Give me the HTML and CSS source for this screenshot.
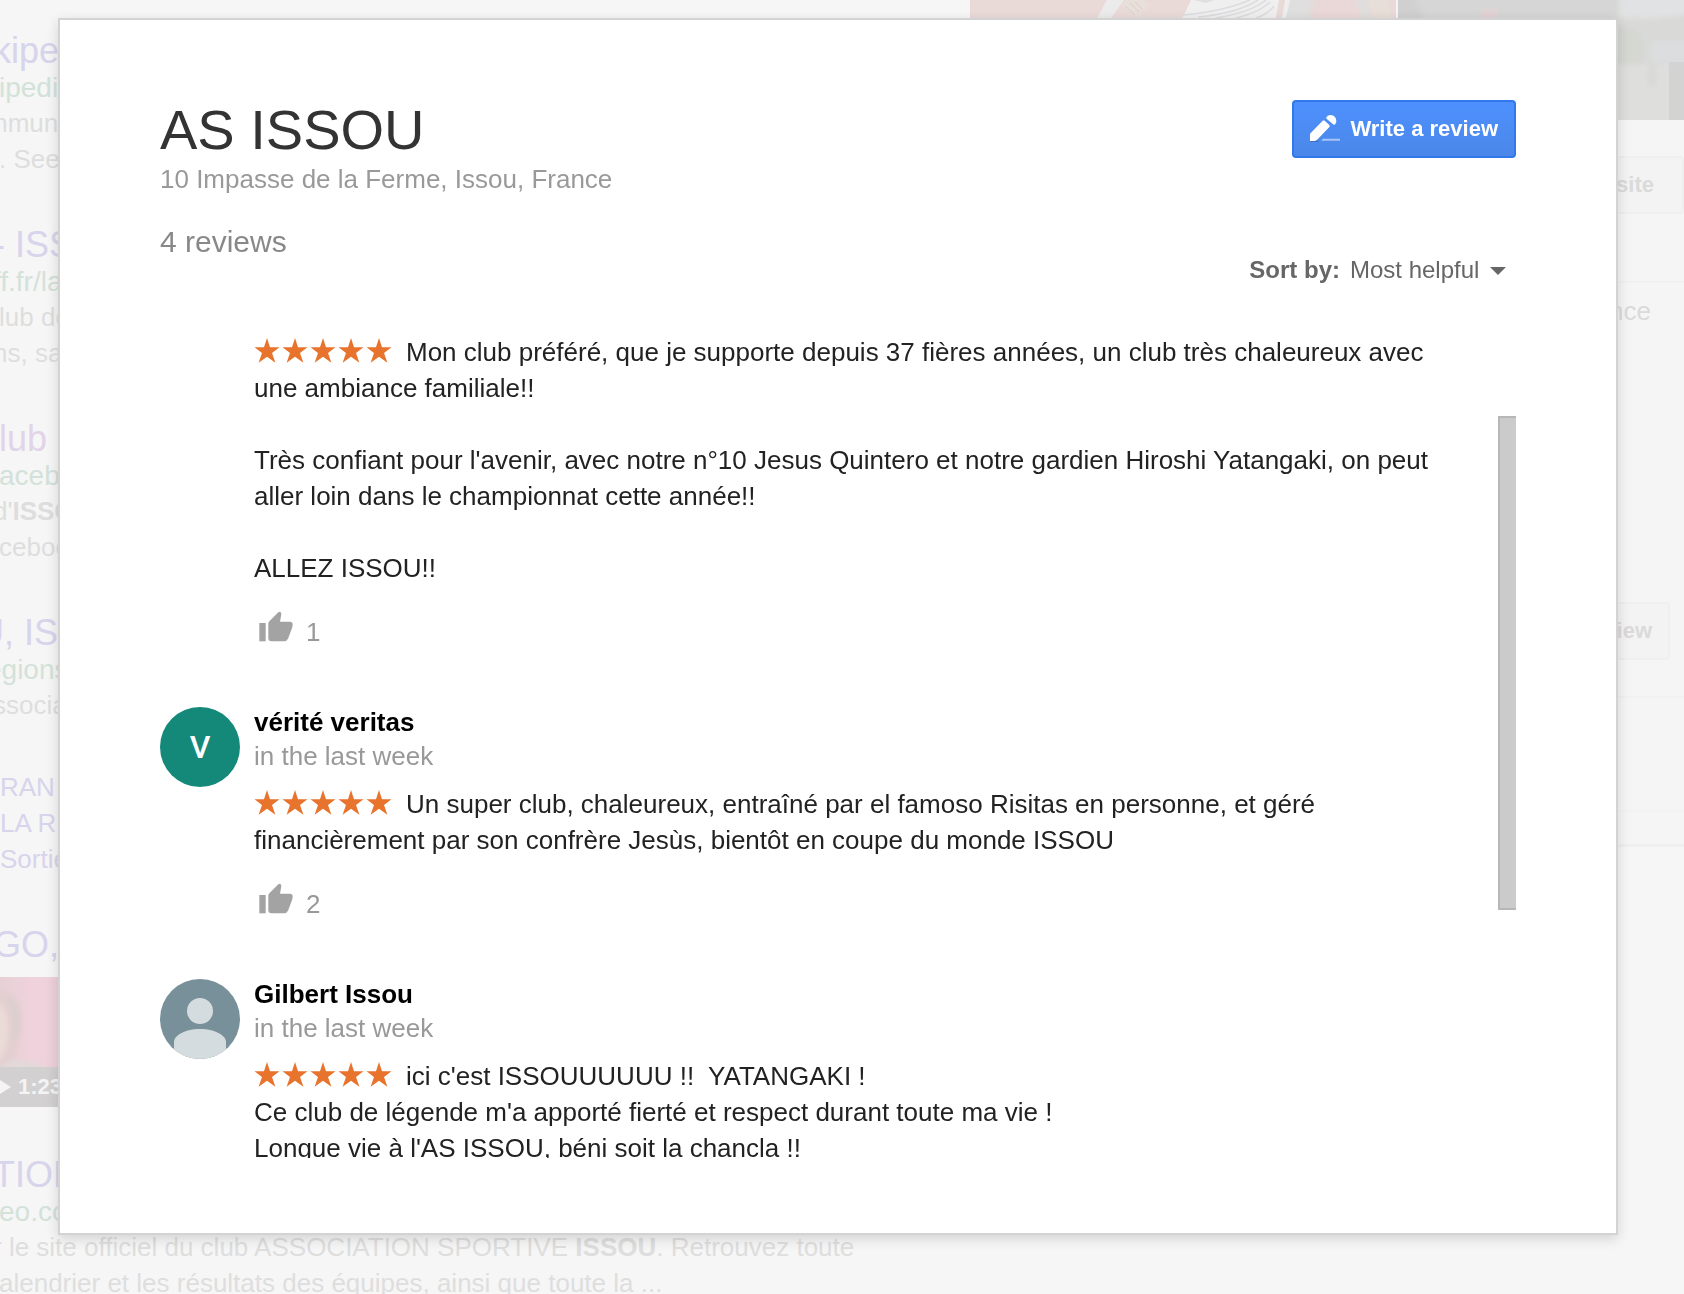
FILE: index.html
```html
<!DOCTYPE html>
<html lang="en">
<head>
<meta charset="utf-8">
<meta name="viewport" content="width=device-width, initial-scale=1">
<title>AS ISSOU reviews</title>
<link rel="stylesheet" href="styles.css">
</head>
<body>
<svg width="0" height="0" class="sprite" aria-hidden="true">
  <symbol id="star" viewBox="0 0 26 25">
    <path d="M13 0l3 9.200h9.500l-7.500 5.800 3.400 9.700-8.400-5.900-8.400 5.900 3.400-9.700L.5 9.200H10z"/>
  </symbol>
  <symbol id="stars" viewBox="0 0 138 25">
    <use href="#star" x="0" width="26" height="25"/>
    <use href="#star" x="28" width="26" height="25"/>
    <use href="#star" x="56" width="26" height="25"/>
    <use href="#star" x="84" width="26" height="25"/>
    <use href="#star" x="112" width="26" height="25"/>
  </symbol>
  <symbol id="thumb" viewBox="57 34 102 93">
    <path d="M58 70h19v55H58z"/>
    <path d="M85 72q0-4 3-7l27-27q3-3 6-1 4 2 3 7l-4 22h30q8 0 8 8 0 7-2 12l-12 31q-4 8-12 8H94q-9 0-9-9z"/>
  </symbol>
</svg>

<div class="page">
  <main class="results">
    <article class="result">
      <a href="#" class="title bleed-1">kipedia</a>
      <cite class="bleed-0">ipedia.org</cite>
      <p class="bleed-2">mmune</p>
      <p class="bleed-0">. See more</p>
    </article>
    <article class="result">
      <a href="#" class="title bleed-1">- ISSOU</a>
      <cite class="bleed-1">ff.fr/la</cite>
      <p class="bleed-0">lub de</p>
      <p class="bleed-1">ns, sa</p>
    </article>
    <article class="result">
      <a href="#" class="title visited bleed-0">lub de</a>
      <cite class="bleed-0">acebook</cite>
      <p class="bleed-1">d'<b>ISSOU</b></p>
      <p class="bleed-0">cebook</p>
    </article>
    <article class="result">
      <a href="#" class="title bleed-3">U, ISSOU</a>
      <cite class="bleed-2">egions</cite>
      <p class="bleed-1">ssociation</p>
      <ul class="sitelinks">
        <li><a href="#">RAN</a></li>
        <li><a href="#">LA RE</a></li>
        <li><a href="#">Sortie</a></li>
      </ul>
    </article>
    <article class="result">
      <a href="#" class="title bleed-1">GO, IS</a>
      <div class="video">
        <svg viewBox="0 0 80 130" preserveAspectRatio="none" aria-hidden="true">
          <defs>
            <linearGradient id="pink" x1="0" x2="1"><stop offset="0" stop-color="#e6d0d6"/><stop offset=".4" stop-color="#f0d2dc"/><stop offset="1" stop-color="#ead0d8"/></linearGradient>
            <filter id="soft"><feGaussianBlur stdDeviation="2.500"/></filter>
          </defs>
          <path fill="url(#pink)" d="M0 0h80v130H0z"/>
          <g filter="url(#soft)">
            <path fill="#e3cfd0" d="M-5 14C8 10 22 22 22 42c0 18-4 36-14 50H-5z"/>
            <path fill="#dccfcf" d="M6 20c12 2 16 14 14 32-1 9-4 12-7 8-1-14-1-30-7-40z"/>
            <path fill="#ebdbd8" d="M-5 26c9 0 13 12 13 24S6 78-5 86z"/>
            <path fill="#e2d9d9" d="M14 82c20 2 34 8 44 18v30H-5V92z"/>
          </g>
        </svg>
        <span class="duration"><svg width="14" height="16" viewBox="0 0 14 16" aria-hidden="true"><path d="M0 1l11 7-11 7z"/></svg>1:23</span>
      </div>
    </article>
    <article class="result">
      <a href="#" class="title bleed-1">TION SP</a>
      <cite class="bleed-0">eo.com</cite>
      <p class="bleed-1">r le site officiel du club ASSOCIATION SPORTIVE <b>ISSOU</b>. Retrouvez toute</p>
      <p class="bleed-0">alendrier et les résultats des équipes, ainsi que toute la ...</p>
    </article>
  </main>

  <aside class="panel">
    <div class="photos">
      <svg viewBox="0 0 426 120" preserveAspectRatio="none" aria-hidden="true">
        <path fill="#e9dad8" d="M0 0h426v120H0z"/>
        <path fill="#ecebec" d="M137 0h17l-13 18h-14z"/>
        <path fill="#e8dfda" d="M155 0h18l6 4-3 7-4-1-1 6-5 1-15-11z"/>
        <path fill="none" stroke="#d8cdc8" d="M155 6l10 9M160 3l9 9M165 2l7 7"/>
        <path fill="#efeff0" d="M221 0h88l-4 22H209l5-7z"/>
        <path fill="none" stroke="#dcdcde" stroke-width="1.500" d="M214 15q40-4 66-15M228 17q40-4 60-17M246 18q36-6 50-18M266 18q24-6 34-16M286 18q12-4 18-12"/>
        <path fill="#dfdfdf" d="M224 0h20l-8 3zM316 0h22l-3 18h-20z"/>
        <path fill="#eeeeef" d="M315 0h5l-4 18h-4z"/>
        <path fill="#e1dddd" d="M338 0h60l4 18h-66z"/>
        <path fill="#e9d8d7" d="M345 0h40l6 18h-50z"/>
        <path fill="#e7ded7" d="M398 0h20l4 18h-17z"/>
      </svg>
      <svg viewBox="0 0 286 120" preserveAspectRatio="none" aria-hidden="true">
        <path fill="#dededd" d="M0 0h286v120H0z"/>
        <g filter="url(#soft)">
          <path fill="#d5d6d5" d="M-6-6h226v28H-6z"/>
          <path fill="#cfd0cf" d="M-6-6h20l14 28H-6z"/>
          <path fill="#e1e2e3" d="M224-6h70v20l-30 4-40-2z"/>
          <path fill="#d9dad8" d="M216 18q30 4 80-6v52h-80z"/>
          <path fill="#d5d7d1" d="M206 26q24-2 36 8 6 14 2 30h-38z"/>
          <path fill="#dcdddf" d="M254 42h40v20h-40z"/>
          <path fill="#d8d8d8" d="M250 64h8v22h-8z"/>
          <path fill="#e2d2d4" d="M82 9h18v10H84z"/>
        </g>
        <path fill="#d3d3d3" d="M271 62h15v58h-15z"/>
      </svg>
    </div>
    <div class="site-row"><button type="button" class="ghost">Website</button></div>
    <p class="address">Issou, France</p>
    <div class="review-row"><button type="button" class="ghost">Write a review</button></div>
    <div class="panel-row"></div>
    <div class="panel-foot"></div>
  </aside>
</div>

<section class="dialog" role="dialog" aria-labelledby="place">
  <header class="head">
    <div class="about">
      <h1 id="place">AS ISSOU</h1>
      <p class="where">10 Impasse de la Ferme, Issou, France</p>
      <p class="count">4 reviews</p>
    </div>
    <div class="tools">
      <button type="button" class="write">
        <svg width="30" height="28" viewBox="60 54 90 84" aria-hidden="true">
          <path fill="#4272bd" d="M60 131h28l-4 4H60z"/>
          <path fill="#fff" d="M60 110l38-39q3-3 6 0l14 13q3 3 0 6l-35 37q-5 5-10 5H60z"/>
          <path fill="#fff" d="M108 64q4-10 14-10 8 0 13 6 5 7 4 14-2 7-7 10z"/>
          <path fill="#a6c5f7" d="M98 125h52v6H94z"/>
        </svg>
        Write a review
      </button>
      <div class="sort">
        <label for="sort">Sort by:</label>
        <select id="sort"><option>Most helpful</option></select>
        <svg width="16" height="8" viewBox="0 0 16 8" aria-hidden="true"><path d="M0 0h16L8 8z"/></svg>
      </div>
    </div>
  </header>

  <div class="scroller">
    <div class="reviews">
      <article class="review">
        <div class="body">
          <p class="text"><svg class="stars" role="img" aria-label="5 stars"><use href="#stars"/></svg>Mon club préféré, que je supporte depuis 37 fières années, un club très chaleureux avec une ambiance familiale!!<br><br>Très confiant pour l'avenir, avec notre n°10 Jesus Quintero et notre gardien Hiroshi Yatangaki, on peut aller loin dans le championnat cette année!!<br><br>ALLEZ ISSOU!!</p>
          <button type="button" class="like"><svg width="34" height="31" aria-hidden="true"><use href="#thumb"/></svg>1</button>
        </div>
      </article>

      <article class="review">
        <div class="avatar letter">V</div>
        <div class="body">
          <h2>vérité veritas</h2>
          <p class="when">in the last week</p>
          <p class="text"><svg class="stars" role="img" aria-label="5 stars"><use href="#stars"/></svg>Un super club, chaleureux, entraîné par el famoso Risitas en personne, et géré financièrement par son confrère Jesùs, bientôt en coupe du monde ISSOU</p>
          <button type="button" class="like"><svg width="34" height="31" aria-hidden="true"><use href="#thumb"/></svg>2</button>
        </div>
      </article>

      <article class="review">
        <svg class="avatar" viewBox="0 0 80 80" aria-hidden="true">
          <path fill="#78909a" d="M0 0h80v80H0z"/>
          <circle cx="40" cy="32" r="13" fill="#d5dce0"/>
          <path fill="#d5dce0" d="M14 80V63c0-7 12-13 26-13s26 6 26 13v17z"/>
        </svg>
        <div class="body">
          <h2>Gilbert Issou</h2>
          <p class="when">in the last week</p>
          <p class="text"><svg class="stars" role="img" aria-label="5 stars"><use href="#stars"/></svg>ici c'est ISSOUUUUUU !!&nbsp; YATANGAKI !<br>Ce club de légende m'a apporté fierté et respect durant toute ma vie !<br>Longue vie à l'AS ISSOU, béni soit la chancla !!</p>
        </div>
      </article>
    </div>
    <div class="track"><div class="grip"></div></div>
  </div>
</section>
</body>
</html>
```
FILE: styles.css
```css
* { box-sizing: border-box; }

body {
  margin: 0;
  height: 100vh;
  overflow: hidden;
  background: #f6f6f6;
  color: #222;
  font: 26px/36px "Liberation Sans", Arial, sans-serif;
}

h1, h2, p, ul { margin: 0; padding: 0; font-weight: normal; }
a { text-decoration: none; }
button, select { font-family: inherit; }
.sprite { position: absolute; }

/* Washed-out search page behind the dialog */
.page {
  display: flex;
  justify-content: space-between;
  height: 100vh;
  overflow: hidden;
}

.results {
  flex: 1;
  min-width: 0;
  display: flex;
  flex-direction: column;
  gap: 47px;
  padding-top: 30px;
  color: #dedede;
  white-space: nowrap;
}

.result > * { display: block; }
.title { font-size: 36px; line-height: 41px; color: #d7d4ec; }
.title.visited { color: #e2d4e8; }
cite { font-size: 28px; line-height: 34px; font-style: normal; color: #d3e2d9; }
.sitelinks { list-style: none; margin-top: 46px; }
.sitelinks a { color: #d7d4ec; }

/* How far a line runs past the left window edge */
.bleed-0 { text-indent: -1px; }
.bleed-1 { text-indent: -7px; }
.bleed-2 { text-indent: -14px; }
.bleed-3 { text-indent: -22px; }

.video {
  position: relative;
  width: 80px;
  height: 130px;
  margin-top: 12px;
}
.video > svg { display: block; width: 100%; height: 100%; }
.duration {
  position: absolute;
  inset: auto 0 0 0;
  display: flex;
  align-items: center;
  gap: 4px;
  height: 40px;
  background: #d2d0d0;
  color: #f4f4f4;
  font-size: 22px;
  font-weight: bold;
}
.duration svg { fill: #f4f4f4; }

.panel { width: 714px; flex: none; background: #f5f5f5; align-self: flex-start; }
.photos { display: flex; gap: 2px; height: 120px; }
.photos svg { display: block; height: 120px; }
.photos svg:first-child { width: 426px; }
.photos svg:last-child { width: 286px; }

.ghost {
  height: 58px;
  padding: 0 28px;
  border: 2px solid #efefef;
  border-radius: 4px;
  background: #f3f3f3;
  color: #dadada;
  font-size: 22px;
  font-weight: bold;
}
.site-row {
  display: flex;
  justify-content: flex-end;
  height: 163px;
  padding-top: 36px;
  border-bottom: 2px solid #f1f1f1;
}
.address { padding: 10px 33px 0 0; text-align: right; color: #dadada; }
.review-row {
  display: flex;
  justify-content: flex-end;
  align-items: flex-end;
  height: 369px;
  padding: 0 14px 36px 0;
  border-bottom: 2px solid #f1f1f1;
}
.review-row .ghost { padding: 0 16px; }
.panel-row { height: 114px; border-bottom: 2px solid #f2f2f2; }
.panel-foot { height: 35px; border-bottom: 3px solid #efefef; }

/* Reviews dialog */
.dialog {
  position: fixed;
  inset: 18px 66px 59px 58px;
  display: flex;
  flex-direction: column;
  gap: 46px;
  padding: 80px 100px 75px;
  border: 2px solid #d3d3d3;
  background: #fff;
  box-shadow: 0 4px 12px rgba(0, 0, 0, .14);
}

.head { display: flex; justify-content: space-between; }
h1 { font-size: 56px; line-height: 60px; color: #333; }
.where { margin-top: 2px; line-height: 34px; color: #999; }
.count { margin-top: 28px; font-size: 30px; color: #888; }

.tools { display: flex; flex-direction: column; align-items: flex-end; gap: 94px; }
.write {
  display: flex;
  align-items: center;
  gap: 10px;
  height: 58px;
  padding: 0 16px;
  border: 2px solid #3079ed;
  border-radius: 4px;
  background: linear-gradient(#4d90fe, #4b87e8);
  color: #fff;
  font-size: 22px;
  font-weight: bold;
}
.sort {
  display: flex;
  align-items: center;
  gap: 10px;
  padding-right: 10px;
  color: #666;
  font-size: 24px;
  line-height: 36px;
}
.sort label { font-weight: bold; }
.sort select {
  appearance: none;
  height: 36px;
  padding: 0;
  border: 0;
  background: none;
  color: #666;
  font-size: 24px;
  line-height: 36px;
}
.sort svg { fill: #666; margin-top: 2px; }

.scroller {
  flex: 1;
  min-height: 0;
  display: flex;
  justify-content: space-between;
  overflow: hidden;
}
.reviews {
  flex: 1;
  display: flex;
  flex-direction: column;
  gap: 55px;
  padding-right: 48px;
}
.review { position: relative; padding-left: 94px; }
.avatar {
  position: absolute;
  left: 0;
  top: 2px;
  width: 80px;
  height: 80px;
  border-radius: 50%;
}
.letter {
  background: #14897a;
  color: #fff;
  font: 500 32px/80px Roboto, sans-serif;
  text-align: center;
}
h2 { font-size: 26px; line-height: 34px; font-weight: bold; color: #000; }
.when { margin-bottom: 13px; line-height: 34px; color: #999; }
.stars {
  width: 138px;
  height: 25px;
  margin-right: 14px;
  vertical-align: -2px;
  fill: #e7732c;
}
.like {
  display: flex;
  align-items: center;
  gap: 13px;
  height: 36px;
  margin-top: 28px;
  padding: 0 5px;
  border: 0;
  background: none;
  color: #999;
  font-size: 26px;
}
.like svg { fill: #a3a3a3; margin-bottom: 12px; }

.track { flex: none; width: 18px; height: 100%; padding-top: 82px; }
.grip {
  height: 494px;
  border: 2px solid #b7b7b7;
  border-right: 0;
  background: #cbcbcb;
}
```
